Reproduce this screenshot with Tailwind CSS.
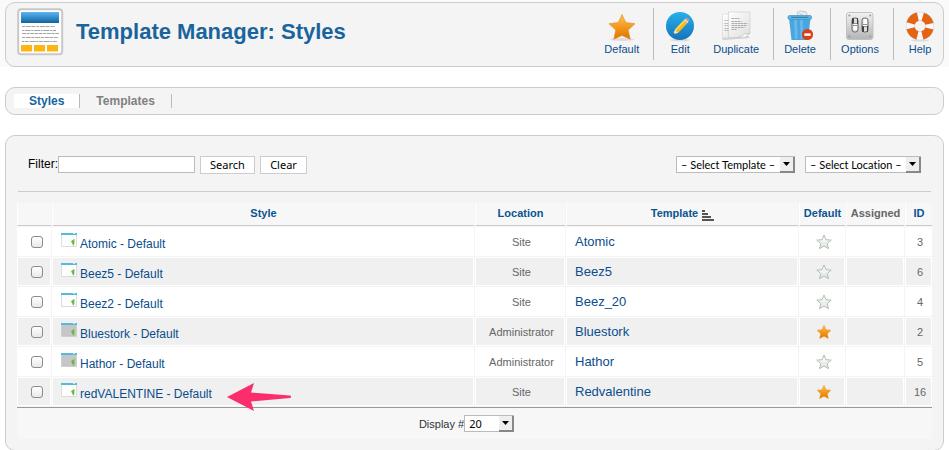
<!DOCTYPE html>
<html lang="en">
<head>
<meta charset="utf-8">
<meta name="viewport" content="width=device-width, initial-scale=1">
<title>Template Manager: Styles</title>
<script src="https://cdn.jsdelivr.net/npm/@tailwindcss/browser@4"></script>
</head>
<body class="bg-white font-['Liberation_Sans',Arial,sans-serif] text-xs text-black overflow-x-hidden">

<svg class="absolute size-0" aria-hidden="true">
  <defs>
    <linearGradient id="gold" x1="0" y1="0" x2="0" y2="1"><stop offset="0" stop-color="#fcc45c"/><stop offset=".5" stop-color="#f39a1c"/><stop offset="1" stop-color="#dd7400"/></linearGradient>
    <linearGradient id="pale" x1="0" y1="0" x2="0" y2="1"><stop offset="0" stop-color="#ffffff"/><stop offset="1" stop-color="#dfe5df"/></linearGradient>
    <linearGradient id="blue" x1="0" y1="0" x2="0" y2="1"><stop offset="0" stop-color="#27b0ee"/><stop offset="1" stop-color="#1573b8"/></linearGradient>
    <linearGradient id="banner" x1="0" y1="0" x2="0" y2="1"><stop offset="0" stop-color="#5cb4f0"/><stop offset="1" stop-color="#11659f"/></linearGradient>
    <linearGradient id="steel" x1="0" y1="0" x2="0" y2="1"><stop offset="0" stop-color="#f2f2f2"/><stop offset="1" stop-color="#b4b4b4"/></linearGradient>
    <linearGradient id="paper" x1="0" y1="0" x2="1" y2="1"><stop offset="0" stop-color="#ffffff"/><stop offset="1" stop-color="#dedede"/></linearGradient>
    <symbol id="win-site" viewBox="0 0 16 14"><path fill="#fdfdfd" stroke="#dcdcdc" d="M.5 1.5h15v12H.5z"/><path fill="#55bbdb" d="M0 0h16v2H0z"/><path fill="#c9e8f3" d="M12 0h2v1h-2z"/><path fill="#62bb3c" d="m10 8.200 3.400-2.400v5.600l-.8-.8.6 1.600-1.200.4-.5-1.700z"/></symbol>
    <symbol id="win-admin" viewBox="0 0 16 14"><path fill="#c6c6c6" stroke="#cfcfcf" d="M.5 1.5h15v12H.5z"/><path fill="#55bbdb" d="M0 0h16v2H0z"/><path fill="#c9e8f3" d="M12 0h2v1h-2z"/><path fill="#62bb3c" d="m10 8.200 3.400-2.400v5.600l-.8-.8.6 1.600-1.200.4-.5-1.700z"/></symbol>
    <symbol id="star-on" viewBox="0 0 16 16"><path fill="url(#gold)" stroke="#e8962a" stroke-width=".5" stroke-linejoin="round" d="m8 1.200 2.100 4.500 4.800.6-3.500 3.400.9 4.900L8 12.200l-4.300 2.400.9-4.900L1.100 6.300l4.800-.6z"/></symbol>
    <symbol id="star-off" viewBox="0 0 16 16"><path fill="url(#pale)" stroke="#b4bfb4" stroke-linejoin="round" d="m8 1 2 4.700 5.200.4-4 3.400 1.300 5.200L8 12l-4.500 2.700 1.300-5.200-4-3.400L6 5.700z"/></symbol>
  </defs>
</svg>

<header class="bg-[#fafafa] px-[5px] pt-0.5">
  <div class="flex h-[65px] items-start justify-between rounded-[10px] border border-[#ccc] bg-[#f4f4f4] pl-[11px] pr-0.5 pt-[5px]">
    <div class="flex items-center gap-[11px]">
      <svg class="size-12" viewBox="0 0 48 48" aria-hidden="true">
        <rect x="1.200" y="1.200" width="44" height="45" rx="3" fill="#fff" stroke="#c8c8c8" stroke-width="2"/>
        <path fill="url(#banner)" d="M4 4h38v11H4z"/>
        <g stroke="#a4a4a4" stroke-width="1"><path stroke-dasharray="3 .7 5 .6 4 1" d="M5 18.500h33"/><path stroke-dasharray="2 .6 6 .8" d="M5 22.500h34"/><path stroke-dasharray="4 .6 3 .7" d="M5 25.500h37"/><path stroke-dasharray="3 .8 5 .6" d="M5 29.500h36"/><path stroke-dasharray="2 .7 4 .8 6 .6" d="M5 33.500h35"/></g>
        <path fill="#fdb514" d="M4 37h11v6.500H4zm13 0h11v6.500H17zm13 0h11v6.500H30z"/>
      </svg>
      <h1 class="text-[22px] font-bold leading-7 text-[#1a649d]">Template Manager: Styles</h1>
    </div>
    <nav aria-label="Toolbar" class="flex h-[52px] text-[11px] leading-[14px] text-[#0a4d8c]">
      <a href="#" class="flex flex-col items-center pl-2.5 pr-[5px] pt-0.5">
        <svg class="size-8" viewBox="0 0 32 32" aria-hidden="true"><ellipse cx="16" cy="29.500" rx="12" ry="1.500" fill="#dcdcdc"/><path fill="url(#gold)" stroke="#e08a1c" stroke-width=".6" stroke-linejoin="round" d="m16 4.500 3.700 8 9.300 1.200-6.800 6.400 2 9.100L16 25.500l-8.200 3.700 2-9.100L3 13.700l9.300-1.200z"/></svg>
        Default
      </a>
      <span class="ml-[9px] w-px bg-[#bbb]"></span>
      <a href="#" class="flex flex-col items-center pl-2.5 pr-[7px] pt-0.5">
        <svg class="size-8" viewBox="0 0 32 32" aria-hidden="true"><ellipse cx="16" cy="30" rx="10" ry="1.500" fill="#dcdcdc"/><circle cx="16" cy="16" r="14" fill="url(#blue)"/><path fill="#f9b91b" d="m11 19.500 9-9.500 3.300 3.200-9 9.500z"/><path fill="#fcdc5c" d="m11 19.500 9-9.500 1.200 1.100-9 9.500z"/><path fill="#f3e3c4" d="m11 19.500 3.300 3.200L9 24.500z"/><path fill="#333" d="m9.600 22.700 1.200 1.200-1.800.6z"/><path fill="#ddd" d="m20 10 1.300-1.400 3.300 3.200-1.300 1.400z"/><path fill="#e58a80" d="M21.300 8.600q1.600-1.700 3.200-.1t.1 3.300z"/></svg>
        Edit
      </a>
      <a href="#" class="flex flex-col items-center pl-2.5 pr-[5px] pt-0.5">
        <svg class="size-8" viewBox="0 0 32 32" aria-hidden="true"><path fill="#cfcfcf" d="M2 28h20l7-2v2L3 30z"/><path fill="url(#paper)" stroke="#d4d4d4" stroke-width=".6" d="M2.500 4h15v24h-15z"/><path stroke="#a2a2a2" stroke-width=".8" stroke-dasharray="2 .5" d="M4.500 10.500h4m-4 3h4m-4 2h4m-4 3h4m-4 2h4"/><path fill="url(#paper)" stroke="#cacaca" stroke-width=".6" d="M8.500 2H30v21l-5.500 4.500h-16z"/><path fill="#fff" stroke="#bbb" stroke-width=".6" d="M30 23l-5.500 4.500q-4 .5-7 0 6-1 7-3.500 3 .3 5.500-1z"/><path stroke="#9a9a9a" stroke-width=".8" stroke-dasharray="3 .5 2 .5" d="M11.500 8.500h8m-8 3h10m-10 2h16m-16 2h15m-15 2h13m-13 2h5"/></svg>
        Duplicate
      </a>
      <span class="ml-[9px] w-px bg-[#bbb]"></span>
      <a href="#" class="flex flex-col items-center pl-2.5 pr-[5px] pt-0.5">
        <svg class="size-8" viewBox="0 0 32 32" aria-hidden="true"><path fill="#f1f1f1" stroke="#bbb" stroke-width=".8" d="m14 6-1-3.500 4-1.500 5 1 1 2.500-3 2z"/><path fill="none" stroke="#aaa" stroke-width=".6" d="m15 3.500 3 1 2-2"/><path fill="#4ba6df" d="M5 8h21.500l-2.500 22H7.500z"/><path fill="#68b9ea" d="M10 10h3l.5 19H11zm6 0h3l-.5 19h-2z"/><rect x="4" y="5.500" width="23.500" height="4" rx="1.500" fill="#5fb6e8" stroke="#3f92c6" stroke-width=".7"/><path fill="#33779f" d="M7 6.800h17.500v1H7z"/><circle cx="23.500" cy="24.500" r="5.600" fill="#d7401b"/><path fill="#fff" d="M20.300 23.400h6.400v2.400h-6.400z"/></svg>
        Delete
      </a>
      <span class="ml-[9px] w-px bg-[#bbb]"></span>
      <a href="#" class="flex flex-col items-center pl-2.5 pr-[5px] pt-0.5">
        <svg class="size-8" viewBox="0 0 32 32" aria-hidden="true"><rect x="2.500" y="2.500" width="26.500" height="27" rx="2.500" fill="url(#steel)" stroke="#c2c2c2"/><g fill="#999"><circle cx="5.300" cy="5.500" r="1"/><circle cx="26.200" cy="5.500" r="1"/><circle cx="5.300" cy="26.500" r="1"/><circle cx="26.200" cy="26.500" r="1"/></g><g stroke="#666"><rect x="8" y="8" width="6" height="14" rx="2.500" fill="#ddd"/><rect x="18" y="8" width="6" height="14" rx="2.500" fill="#ddd"/></g><path fill="#444" d="M8 8h2v6H8zm5 0h1v6h-1zm5 8h2v6h-2zm5 0h1v6h-1z"/><path fill="#fff" d="M9.500 13h3.500v7H9.500zm10-4H23v7h-3.500z"/><path stroke="#777" stroke-width=".8" d="M9 13.500h4m-4 2h4m6-1h4m-4 2h4"/></svg>
        Options
      </a>
      <span class="ml-[9px] w-px bg-[#bbb]"></span>
      <a href="#" class="flex flex-col items-center pl-2.5 pr-[5px] pt-0.5">
        <svg class="size-8" viewBox="0 0 32 32" aria-hidden="true"><ellipse cx="16" cy="30.300" rx="9" ry="1.200" fill="#dcdcdc"/><circle cx="16" cy="16" r="9.700" fill="none" stroke="#d0d0d0" stroke-width="9"/><circle cx="16" cy="16" r="9.700" fill="none" stroke="#f8f8f8" stroke-width="8"/><circle cx="16" cy="16" r="9.700" fill="none" stroke="#e36414" stroke-width="8.400" stroke-dasharray="10.200 5.030" stroke-dashoffset="-2.500"/></svg>
        Help
      </a>
    </nav>
  </div>
</header>

<main class="px-[5px]">
  <nav aria-label="Submenu" class="mt-5 flex h-7 items-center rounded-[10px] border border-[#ccc] bg-[#f4f4f4] pl-2 text-xs font-bold leading-[14px]">
    <a href="#" class="border-r border-[#bbb] bg-white px-[15px] text-[#1a649d]">Styles</a>
    <a href="#" class="border-r border-[#bbb] px-4 text-[#808080]">Templates</a>
  </nav>

  <section class="mt-5 rounded-[10px] border border-[#ccc] bg-[#f4f4f4] px-2.5 pb-2.5 pt-5">
    <form class="mx-0.5 flex items-start justify-between border-b border-[#ccc] px-2.5 pb-[17px]">
      <div class="flex items-start">
        <label for="filter" class="leading-4">Filter:</label>
        <input id="filter" type="text" class="h-[17px] w-[137px] border border-[#bbb] bg-white px-1 text-[11px]">
        <button type="button" class="ml-[5px] h-[18px] w-[55px] border border-[#ccc] bg-white font-['Noto_Sans',sans-serif] text-[11px] leading-4">Search</button>
        <button type="button" class="ml-[5px] h-[18px] w-[47px] border border-[#ccc] bg-white font-['Noto_Sans',sans-serif] text-[11px] leading-4">Clear</button>
      </div>
      <div class="flex gap-2.5">
        <div class="relative">
          <select aria-label="Select Template" class="block h-[17px] w-[119px] appearance-none border border-[#bbb] bg-white pl-1 font-['Lato',sans-serif] text-[11px] leading-[15px] [font-variant-ligatures:none]"><option>– Select Template –</option></select>
          <span class="pointer-events-none absolute bottom-0 right-0 flex h-4 w-[15px] items-center justify-center border-b-2 border-r-2 border-[#888] bg-[#eee]"><svg class="h-1 w-[7px]" viewBox="0 0 7 4" aria-hidden="true"><path d="M0 0h7L3.500 4z"/></svg></span>
        </div>
        <div class="relative">
          <select aria-label="Select Location" class="block h-[17px] w-[116px] appearance-none border border-[#bbb] bg-white pl-1 font-['Lato',sans-serif] text-[11px] leading-[15px] [font-variant-ligatures:none]"><option>– Select Location –</option></select>
          <span class="pointer-events-none absolute bottom-0 right-0 flex h-4 w-[15px] items-center justify-center border-b-2 border-r-2 border-[#888] bg-[#eee]"><svg class="h-1 w-[7px]" viewBox="0 0 7 4" aria-hidden="true"><path d="M0 0h7L3.500 4z"/></svg></span>
        </div>
      </div>
    </form>

    <table class="mt-2.5 w-full table-fixed border-separate border-spacing-px text-center text-[11px] leading-[14px] text-[#666]">
      <colgroup><col class="w-[34px]"><col><col class="w-[90px]"><col class="w-[232px]"><col class="w-[46px]"><col class="w-[58px]"><col class="w-[27px]"></colgroup>
      <thead class="text-[#0a5490]">
        <tr class="h-[23px] *:border-b *:border-l *:border-b-[#ccc] *:border-l-white *:bg-[#f7f7f7] *:p-0 *:pb-0.5">
          <th></th>
          <th><a href="#">Style</a></th>
          <th><a href="#">Location</a></th>
          <th><a href="#" class="flex items-center justify-center gap-1">Template <svg class="-mb-1 h-[11px] w-3" viewBox="0 0 12 11" aria-hidden="true"><path fill="#555" d="M0 0h3v2H0zm0 3h6v2H0zm0 3h9v2H0zm0 3h12v2H0z"/></svg></a></th>
          <th><a href="#">Default</a></th>
          <th class="text-[#666]">Assigned</th>
          <th><a href="#">ID</a></th>
        </tr>
      </thead>
      <tbody id="rows"></tbody>
      <tfoot>
        <tr class="h-8">
          <td colspan="7" class="border-t border-[#999] bg-[#f7f7f7] p-0 pr-4 text-[#333]">
            <div class="flex items-center justify-center">
              <label for="limit">Display #</label>
              <div class="relative">
                <select id="limit" class="block h-[17px] w-[50px] appearance-none border border-[#bbb] bg-white pl-1 font-['Noto_Sans',sans-serif] text-[11px] leading-[15px] text-black"><option>20</option></select>
                <span class="pointer-events-none absolute bottom-0 right-0 flex h-4 w-[15px] items-center justify-center border-b-2 border-r-2 border-[#888] bg-[#eee]"><svg class="h-1 w-[7px]" viewBox="0 0 7 4" aria-hidden="true"><path d="M0 0h7L3.500 4z"/></svg></span>
              </div>
            </div>
          </td>
        </tr>
      </tfoot>
    </table>
  </section>
</main>

<script>
  const styles = [
    ["Atomic - Default", "Site", "Atomic", false, 3],
    ["Beez5 - Default", "Site", "Beez5", false, 6],
    ["Beez2 - Default", "Site", "Beez_20", false, 4],
    ["Bluestork - Default", "Administrator", "Bluestork", true, 2],
    ["Hathor - Default", "Administrator", "Hathor", false, 5],
    ["redVALENTINE - Default", "Site", "Redvalentine", true, 16]
  ];
  const arrow = `<svg class="absolute left-full top-0 ml-[15px] h-7 w-16" viewBox="0 0 64 28" aria-hidden="true"><path fill="#fb2d6c" d="M0 14 27 0l-3 9.500 39 3q1 0 1 1.200t-1 1.300L24 18.500 27 28z"/></svg>`;
  document.getElementById("rows").innerHTML = styles.map(([name, place, template, on, id], i) => `
    <tr class="h-[29px] *:border *:border-white *:p-0 *:pl-[3px] ${i % 2 ? "*:bg-[#f0f0f0]" : "*:bg-white"}">
      <td><input type="checkbox" aria-label="Select ${name}" class="ml-2.5 block size-3 appearance-none rounded-[3px] border border-[#8c8c8c] bg-linear-to-b from-white to-[#e8e8e8]"></td>
      <td><a href="#" class="relative ml-[5px] flex w-fit items-start gap-[3px] text-xs leading-[14px] text-[#0a4d8c]"><svg class="h-3.5 w-4" aria-hidden="true"><use href="#${place === "Site" ? "win-site" : "win-admin"}"/></svg><span class="mt-1">${name}</span>${i === 5 ? arrow : ""}</a></td>
      <td>${place}</td>
      <td class="text-left"><a href="#" class="ml-[5px] text-[13px] text-[#0a4d8c]">${template}</a></td>
      <td><button type="button" aria-label="${on ? "Default style" : "Make default"}" class="mx-auto block size-4"><svg class="size-4" aria-hidden="true"><use href="#${on ? "star-on" : "star-off"}"/></svg></button></td>
      <td></td>
      <td>${id}</td>
    </tr>`).join("");
</script>
</body>
</html>
